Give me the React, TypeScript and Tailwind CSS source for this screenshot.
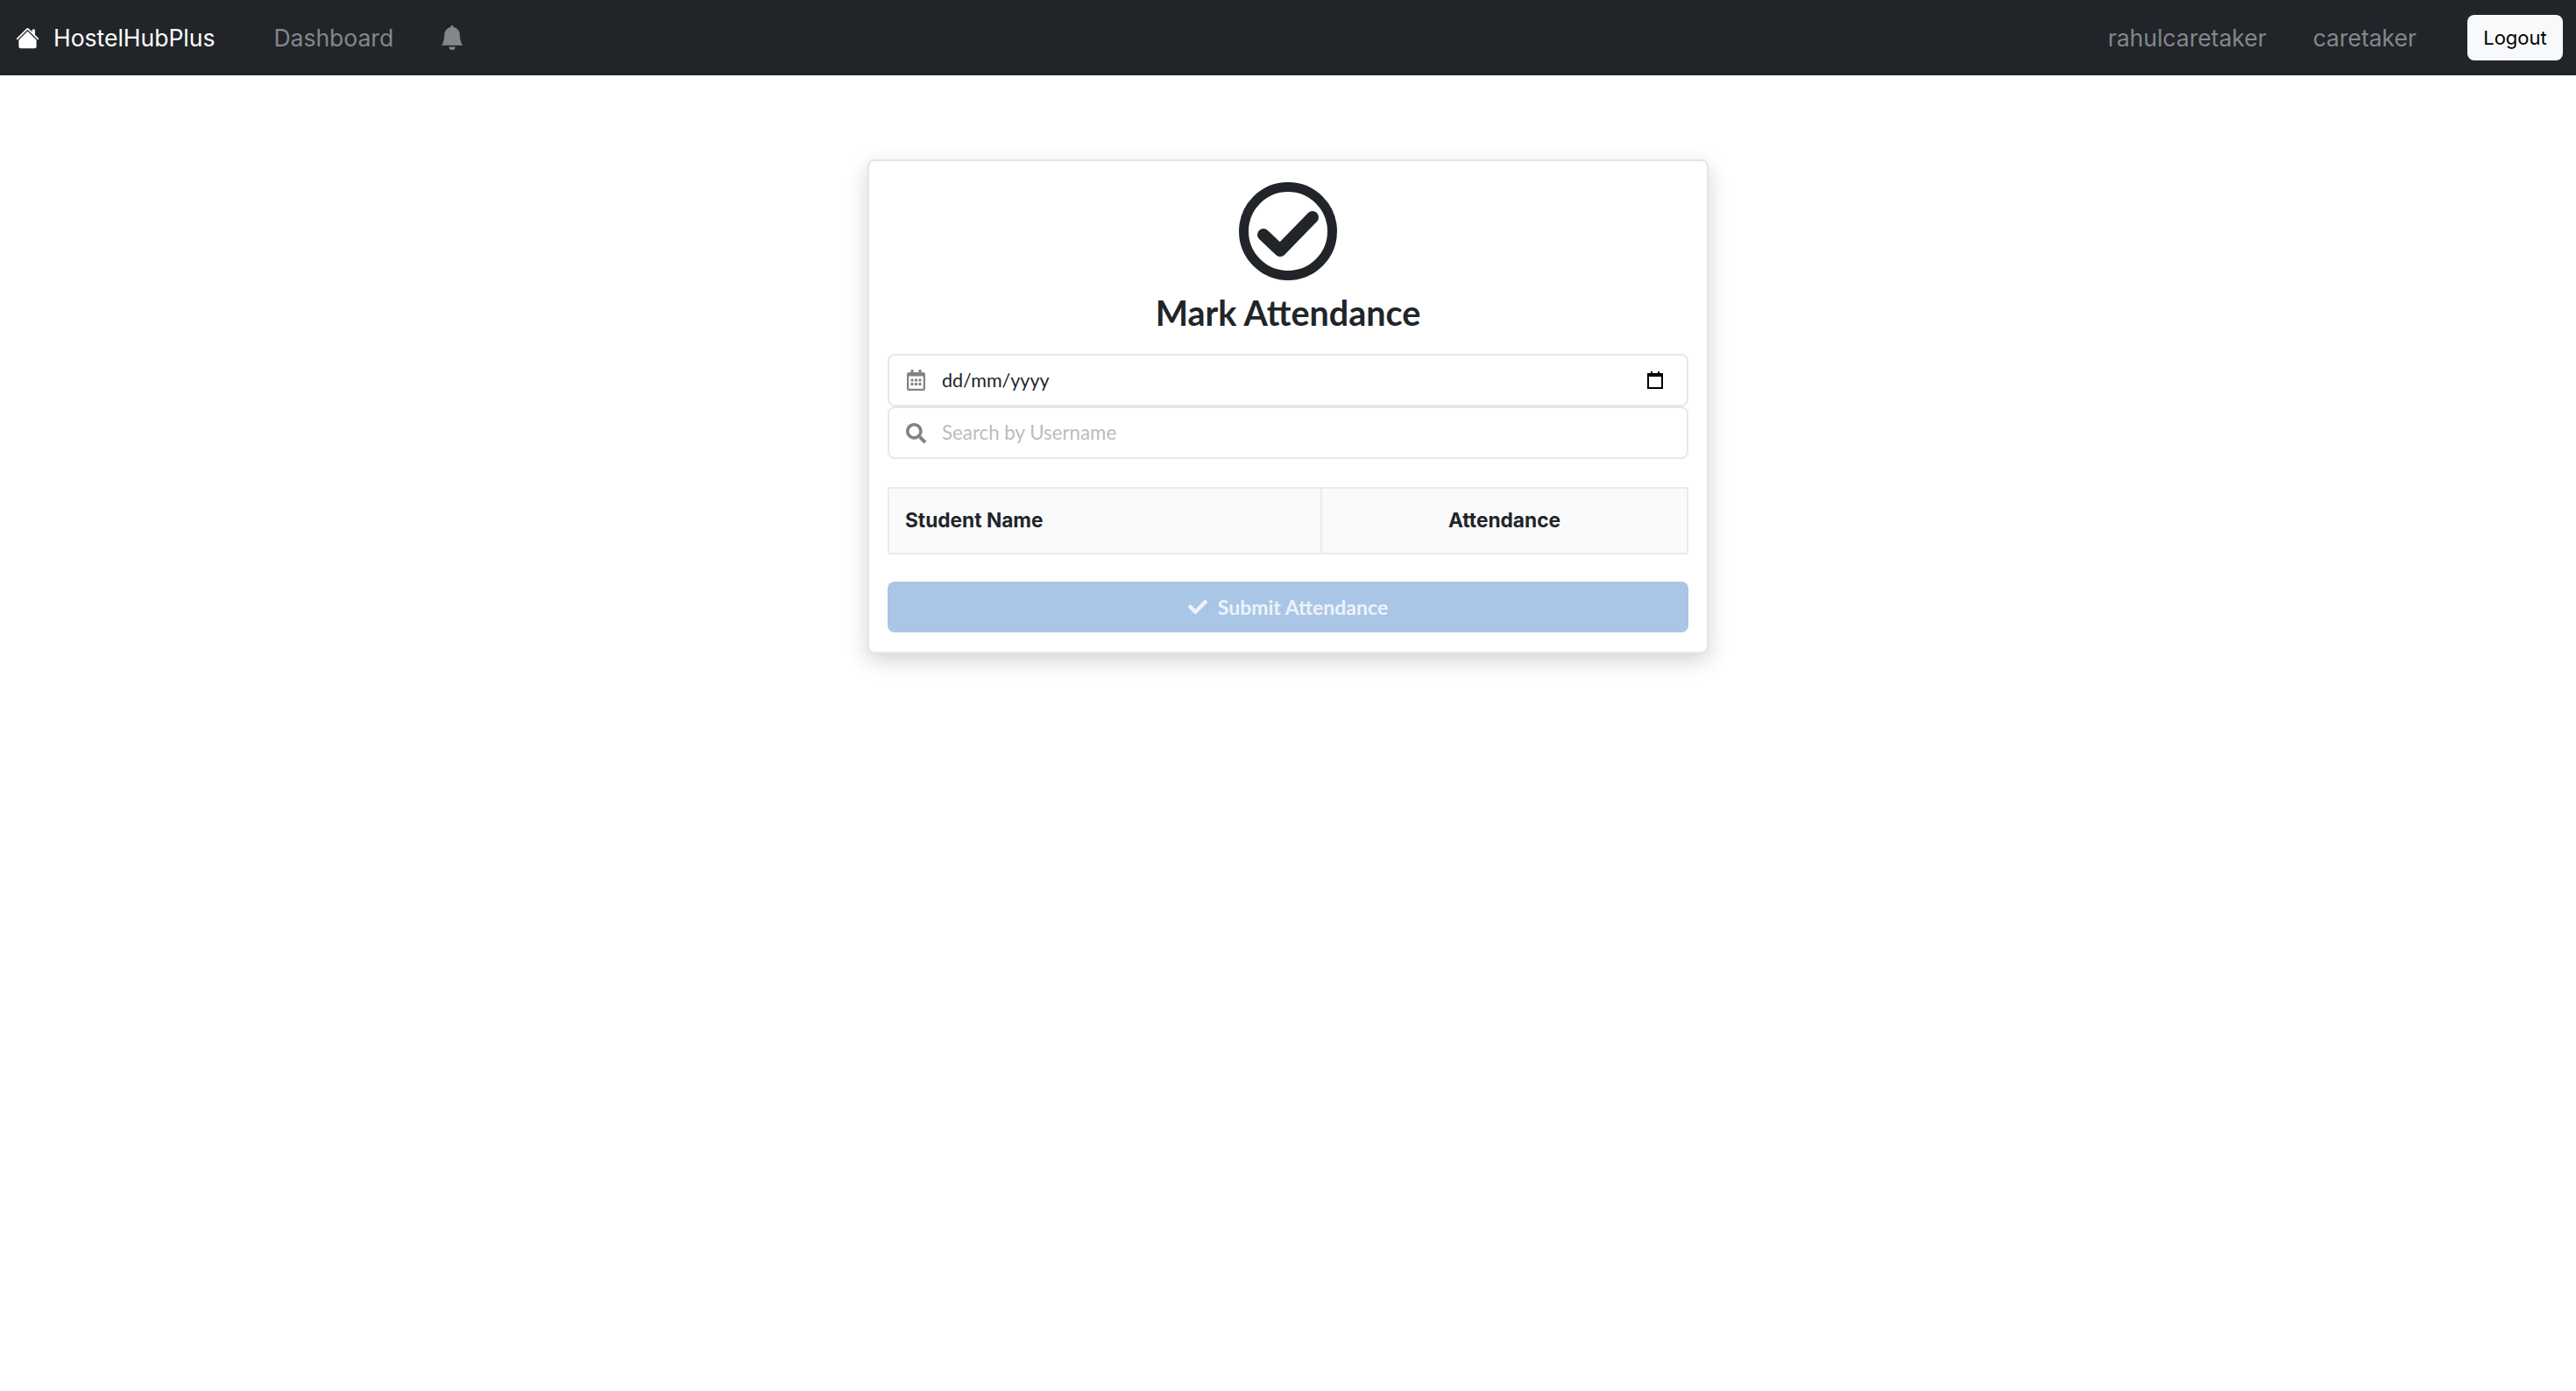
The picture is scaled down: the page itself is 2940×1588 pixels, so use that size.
import { BsBellFill, BsHouseFill } from "react-icons/bs";
import { FaCheck, FaRegCalendarAlt, FaSearch } from "react-icons/fa";

function Navbar() {
  return (
    <nav className="flex h-[86px] items-center bg-[#212529] pl-[18px] pr-[15px] font-['Inter',sans-serif] text-[26.5px] text-[#84878a]">
      <BsHouseFill className="size-[27px] text-white" />
      <span className="ml-[16px] mt-[2px] text-white">HostelHubPlus</span>
      <span className="ml-[67px] mt-[2px]">Dashboard</span>
      <BsBellFill className="ml-[53px] size-[28px]" />
      <span className="ml-auto mt-[2px]">rahulcaretaker</span>
      <span className="ml-[53px] mt-[2px]">caretaker</span>
      <button className="ml-[58px] h-[52px] w-[109px] rounded-lg bg-[#f8f9fa] text-[22px] text-black">Logout</button>
    </nav>
  );
}

function InputRow({ icon, children }: { icon: React.ReactNode; children: React.ReactNode }) {
  return (
    <div className="flex h-[60px] items-center rounded-lg border-2 border-[#e6e7e9] bg-white pl-[18px] pr-[27px]">
      <span className="mr-[18px] flex w-[24px] justify-center text-[#808285]">{icon}</span>
      {children}
    </div>
  );
}

export default function App() {
  return (
    <div className="min-h-[1588px] bg-white">
      <Navbar />
      <div className="mx-auto mt-[96px] w-[960px] rounded-lg border-2 border-[#e6e6e6] bg-white px-[21px] pb-[22px] pt-[24px] font-['Lato',sans-serif] shadow-[0_8px_24px_rgba(0,0,0,0.18)]">
        <div className="flex justify-center">
          <svg viewBox="0 0 112 112" className="size-[112px]" fill="none" stroke="#212529">
            <circle cx="56" cy="56" r="50.5" strokeWidth="11" />
            <path d="M28 60L47 78L84 40" strokeWidth="14" strokeLinecap="round" strokeLinejoin="round" />
          </svg>
        </div>
        <h2 className="mt-[13px] mb-[-1px] text-center text-[39.5px] leading-[48px] font-bold text-[#212529]">Mark Attendance</h2>
        <div className="mt-[24px]">
          <InputRow icon={<FaRegCalendarAlt className="h-[24px] w-[21px]" />}>
            <span className="flex-1 text-[21.5px] text-[#212529]">dd/mm/yyyy</span>
            <svg viewBox="0 0 18 20" className="h-[20px] w-[18px]">
              <path d="M1 3h16v16H1z" fill="none" stroke="#000" strokeWidth="2" />
              <path d="M1 2h16v4H1zM4 0h2v3H4zM12 0h2v3h-2z" fill="#000" />
            </svg>
          </InputRow>
          <InputRow icon={<FaSearch className="size-[23px]" />}>
            <input className="flex-1 text-[22.3px] outline-none placeholder:text-[#bbbcbe]" placeholder="Search by Username" />
          </InputRow>
        </div>
        <table className="mt-[32px] w-full table-fixed border-collapse font-['Inter',sans-serif] text-[22.7px] font-bold text-[#212529]">
          <thead>
            <tr className="h-[75px] bg-[#f9fafb]">
              <th className="w-[494px] border-2 border-[#e9eaec] pl-[18px] text-left">Student Name</th>
              <th className="border-2 border-[#e9eaec] text-center">Attendance</th>
            </tr>
          </thead>
        </table>
        <button className="mt-[31px] flex h-[58px] w-full items-center justify-center gap-[12px] rounded-lg bg-[#aac6e7] text-[23px] font-bold text-[#eef3fa]">
          <FaCheck className="size-[22px]" />
          Submit Attendance
        </button>
      </div>
    </div>
  );
}
